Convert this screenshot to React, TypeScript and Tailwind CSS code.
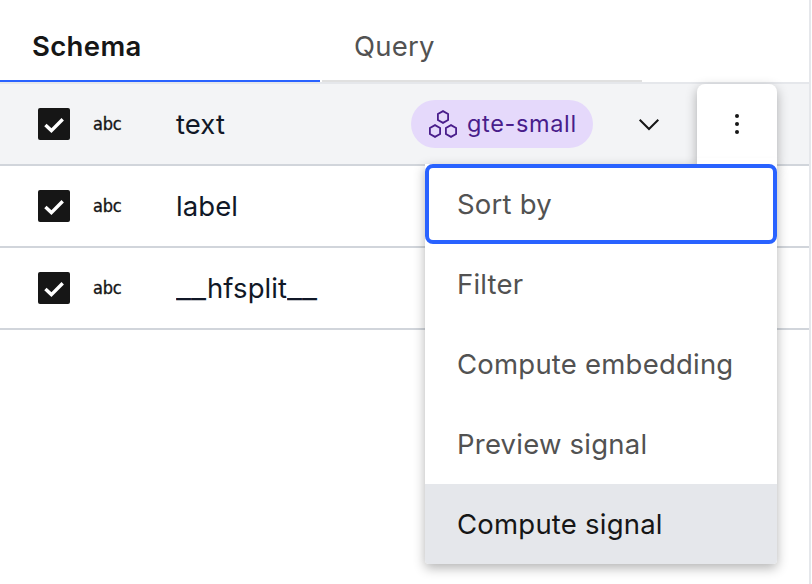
import React from "react";

const menuItems = ["Sort by", "Filter", "Compute embedding", "Preview signal", "Compute signal"];

function Checkbox() {
  return (
    <span className="flex h-8 w-8 items-center justify-center rounded-[2px] bg-[#161616]">
      <svg width="32" height="32" viewBox="0 0 32 32" fill="none">
        <path d="M7.4 17 13.4 22.6 24.7 11.2" stroke="#fff" strokeWidth="3.4" />
      </svg>
    </span>
  );
}

function EmbeddingIcon() {
  const hexagon = "M0-5.9 5.1-2.95V2.95L0 5.9-5.1 2.95V-2.95Z";
  return (
    <svg width="32" height="32" viewBox="0 0 32 32" fill="none" stroke="#491d8b" strokeWidth="1.8">
      <path transform="translate(16 9)" d={hexagon} />
      <path transform="translate(8 23)" d={hexagon} />
      <path transform="translate(24 23)" d={hexagon} />
    </svg>
  );
}

function FieldName({ name }: { name: string }) {
  return (
    <span className="flex text-[27.5px] leading-10 text-[#111827]">
      {name.split(/(__)/).map((part, i) =>
        part === "__" ? (
          <span key={i} className="w-[31px]">
            <span className="inline-block origin-left scale-x-[1.2]">__</span>
          </span>
        ) : (
          <span key={i} className="tracking-[0.1px]">{part}</span>
        ),
      )}
    </span>
  );
}

function Row({ name, active, children }: { name: string; active?: boolean; children?: React.ReactNode }) {
  return (
    <div
      className={`flex h-[82px] items-center border-b-2 border-[#d1d5db] pl-[38px] ${active ? "bg-[#f3f4f6]" : "bg-white"}`}
    >
      <Checkbox />
      <span className="ml-[23px] w-[83px] font-['DejaVu_Sans_Condensed','DejaVu_Sans',sans-serif] text-[18px] leading-none tracking-[-0.2px] text-[#161616] [-webkit-text-stroke:0.35px_#161616] [font-stretch:condensed]">
        abc
      </span>
      <FieldName name={name} />
      {children}
    </div>
  );
}

export default function App() {
  return (
    <div className="h-[584px] w-[812px] overflow-hidden bg-white font-[Inter,sans-serif]">
      <div className="relative h-full w-[811px] border-r-2 border-[#e5e7eb]">
        <div className="flex h-[84px] gap-[2px] border-b-2 border-[#e5e7eb]">
          <div className="h-[82px] w-[320px] border-b-2 border-[#2962ff] pt-[26px] pl-8 text-[27.5px] leading-10 font-semibold tracking-[0.35px] text-[#161616]">
            Schema
          </div>
          <div className="h-[82px] w-[320px] border-b-2 border-[#e0e0e0] pt-[26px] pl-8 text-[27.5px] leading-10 tracking-[0.25px] text-[#525252]">
            Query
          </div>
        </div>
        <Row name="text" active>
          <div className="mr-[216px] ml-auto flex h-12 w-[182px] items-center rounded-full bg-[#e5d9fb] pl-4">
            <EmbeddingIcon />
            <span className="ml-2 text-[23.5px] leading-8 tracking-[0.64px] text-[#491d8b]">gte-small</span>
          </div>
        </Row>
        <Row name="label" />
        <Row name="__hfsplit__" />

        <svg className="absolute top-[116px] left-[638px]" width="24" height="18" viewBox="0 0 24 18" fill="none">
          <path d="M1.7 3.7 11 13 20.3 3.7" stroke="#161616" strokeWidth="2" />
        </svg>
        <div className="absolute top-[84px] left-[697px] flex h-20 w-20 items-center justify-center rounded-t-[8px] bg-white shadow-[0_4px_12px_rgba(0,0,0,0.3)]">
          <svg width="32" height="32" viewBox="0 0 32 32" fill="#161616">
            <circle cx="16" cy="8" r="2" />
            <circle cx="16" cy="16" r="2" />
            <circle cx="16" cy="24" r="2" />
          </svg>
        </div>
        <div className="absolute top-[164px] left-[425px] w-[352px] rounded-b-[4px] bg-white shadow-[0_4px_12px_rgba(0,0,0,0.3)]">
          {menuItems.map((item, i) => (
            <div
              key={item}
              className={`flex h-20 items-center text-[27.5px] leading-10 tracking-[0.22px] ${
                i === 0
                  ? "rounded-[8px] border-4 border-[#2962ff] pl-7 text-[#525252]"
                  : i === 4
                    ? "rounded-b-[4px] bg-[#e5e7eb] pl-8 text-[#161616]"
                    : "pl-8 text-[#525252]"
              }`}
            >
              {item}
            </div>
          ))}
        </div>
        <div className="absolute top-[158px] left-[697px] h-[6px] w-20 bg-white" />
      </div>
    </div>
  );
}
